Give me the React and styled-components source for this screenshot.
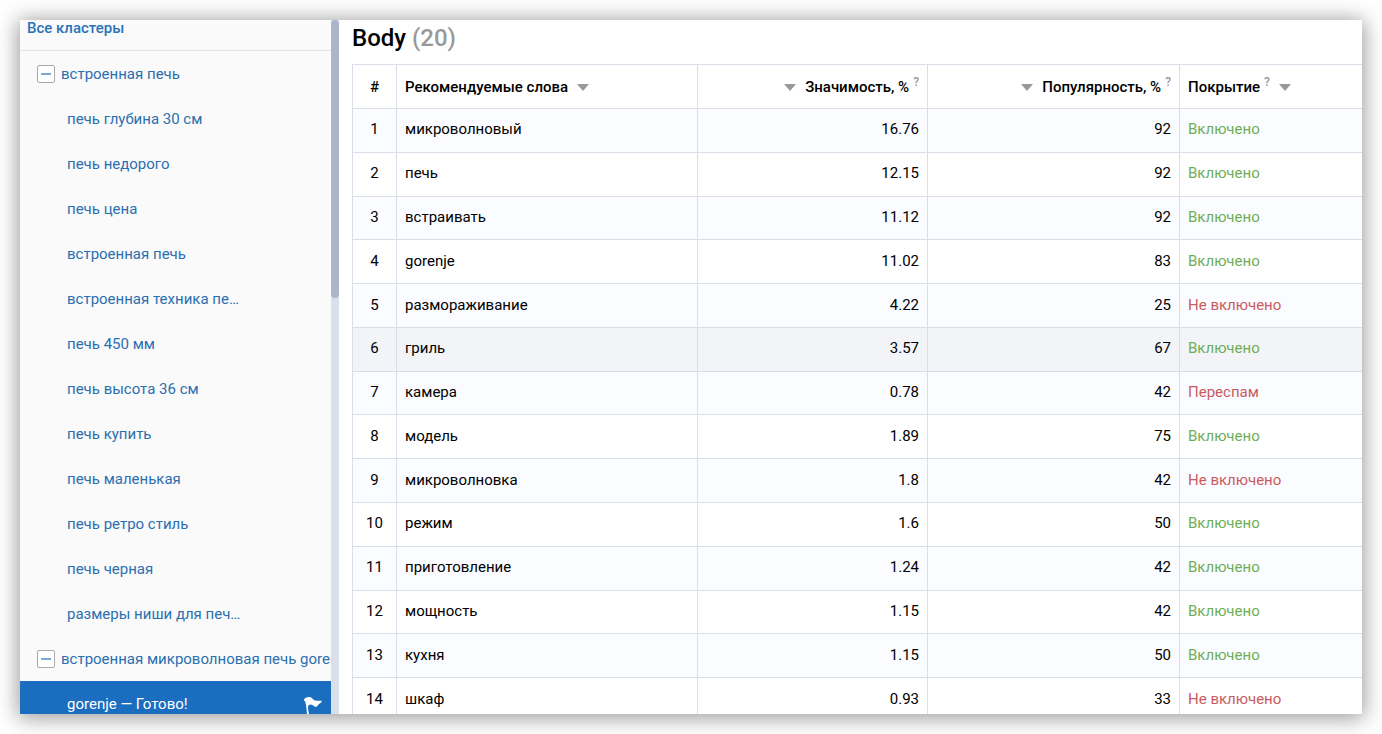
import React from "react"
import styled, { createGlobalStyle } from "styled-components"

const rows = [
  ["микроволновый", "16.76", 92, "on"],
  ["печь", "12.15", 92, "on"],
  ["встраивать", "11.12", 92, "on"],
  ["gorenje", "11.02", 83, "on"],
  ["размораживание", "4.22", 25, "off"],
  ["гриль", "3.57", 67, "on"],
  ["камера", "0.78", 42, "spam"],
  ["модель", "1.89", 75, "on"],
  ["микроволновка", "1.8", 42, "off"],
  ["режим", "1.6", 50, "on"],
  ["приготовление", "1.24", 42, "on"],
  ["мощность", "1.15", 42, "on"],
  ["кухня", "1.15", 50, "on"],
  ["шкаф", "0.93", 33, "off"],
]

const statuses = {
  on: "Включено",
  off: "Не включено",
  spam: "Переспам",
}

const statusColors = {
  on: "#6fae57",
  off: "#ca5b5e",
  spam: "#ca5b5e",
}

const clusters = [
  {
    name: "встроенная печь",
    items: [
      "печь глубина 30 см",
      "печь недорого",
      "печь цена",
      "встроенная печь",
      "встроенная техника пе…",
      "печь 450 мм",
      "печь высота 36 см",
      "печь купить",
      "печь маленькая",
      "печь ретро стиль",
      "печь черная",
      "размеры ниши для печ…",
    ],
  },
  { name: "встроенная микроволновая печь gorenje", items: [] },
]

const GlobalStyle = createGlobalStyle`
  * {
    box-sizing: border-box;
  }

  body {
    margin: 0;
    background: #fff;
    color: #000;
    font: 15px/20px Roboto, "Noto Sans", sans-serif;
  }
`

const Page = styled.div`
  height: 100vh;
  padding: 20px;
  overflow: hidden;
`

const Window = styled.div`
  display: flex;
  height: 100%;
  overflow: hidden;
  background: #fff;
  box-shadow: 0 2px 20px 2px rgba(0, 0, 0, 0.4);
`

const Sidebar = styled.nav`
  display: flex;
  flex: none;
  width: 319px;
`

const Clusters = styled.div`
  flex: 1;
  min-width: 0;
  overflow: hidden;
  background: #fafafa;
`

const AllClusters = styled.a`
  display: block;
  padding: 0 7px 14px;
  border-bottom: 1px solid #dfe3ea;
  color: #2a73b8;
  font-weight: 500;
  line-height: 16px;
  text-decoration: none;
`

const Group = styled.div`
  display: flex;
  align-items: center;
  gap: 6px;
  height: 45px;
  padding-left: 17px;
  overflow: hidden;
`

const Collapse = styled.button`
  display: flex;
  flex: none;
  align-items: center;
  justify-content: center;
  width: 18px;
  height: 18px;
  padding: 0;
  border: 1px solid #aaa;
  border-radius: 2px;
  background: #fff;

  &::before {
    content: "";
    width: 10px;
    height: 2px;
    background: #7ca9d4;
  }
`

const ClusterLink = styled.a`
  min-width: 0;
  overflow: hidden;
  color: ${(p) => (p.$active ? "#fff" : "#2a6fb0")};
  white-space: nowrap;
  text-decoration: none;
`

const Item = styled.div`
  display: flex;
  align-items: center;
  justify-content: space-between;
  height: 45px;
  padding: 0 8px 0 47px;
  background: ${(p) => (p.$active ? "#1b6dc0" : "transparent")};
`

const Track = styled.div`
  flex: none;
  width: 8px;
  background: #dadfec;
`

const Thumb = styled.div`
  height: 40%;
  border-radius: 4px;
  background: #abb6cd;
`

const Content = styled.main`
  flex: 1;
  min-width: 0;
  padding: 5px 0 0 13px;
  overflow: hidden;
`

const Title = styled.h1`
  margin: 0 0 13px;
  font-size: 24px;
  font-weight: 500;
  line-height: 26px;

  span {
    color: #999;
  }
`

// The body rows share what the header leaves of the height
const Table = styled.table`
  width: 100%;
  height: 658px;
  table-layout: fixed;
  border-collapse: collapse;
`

const Col = styled.col`
  width: ${(p) => p.$width};
`

const Cell = styled.td`
  padding: 0 8px 2px;
  border: 1px solid #d9dee8;
  border-right-color: ${(p) => (p.$last ? "transparent" : "#d9dee8")};
  color: ${(p) => p.$color || "inherit"};
  text-align: ${(p) => p.$align || "left"};
  white-space: nowrap;
`

const HeadCell = styled(Cell)`
  height: 44px;
  padding-bottom: 0;
  font-weight: 500;
`

const Row = styled.tr`
  background: #fff;

  &:nth-child(odd) {
    background: #fafcff;
  }

  &:nth-child(6) {
    background: #f3f4f8;
  }
`

const SortButton = styled.button`
  display: inline-flex;
  flex-direction: ${(p) => (p.$reverse ? "row-reverse" : "row")};
  align-items: center;
  gap: 9px;
  padding: 0;
  border: 0;
  background: none;
  color: inherit;
  font: inherit;
  vertical-align: middle;

  &::after {
    content: "";
    border: 6px solid transparent;
    border-top: 7px solid #999;
    border-bottom: 0;
  }
`

const Hint = styled.sup`
  padding-left: 4px;
  color: #999;
  font-size: 12px;
  line-height: 0;
`

function Flag() {
  return (
    <svg width="20" height="20" viewBox="0 0 20 20" fill="#fff" aria-hidden="true">
      <path d="M1 6C1 4.500 3 3 6 3C9 3 9.500 5.500 12 6.500C14 7.200 16.500 6.600 19 7C18 9 16.500 9.500 15.500 10.500C14.500 11.500 14.500 12.500 13 13C11 13 10 10.500 8 10.500C6 10.500 5 11.500 5 13C5 15.500 5.500 17.500 6 20H4C3.600 15 3.200 11 2.200 7.500C1.800 7 1 7 1 6Z" />
    </svg>
  )
}

function SortHead({ text, hint, align, last }) {
  return (
    <HeadCell as="th" $align={align} $last={last}>
      <SortButton type="button" $reverse={align === "right"}>
        <span>
          {text}
          {hint && <Hint>?</Hint>}
        </span>
      </SortButton>
    </HeadCell>
  )
}

function App() {
  return (
    <Page>
      <GlobalStyle />
      <Window>
        <Sidebar>
          <Clusters>
            <AllClusters href="#all">Все кластеры</AllClusters>
            {clusters.map(({ name, items }) => (
              <React.Fragment key={name}>
                <Group>
                  <Collapse type="button" aria-label="Свернуть" />
                  <ClusterLink href="#group">{name}</ClusterLink>
                </Group>
                {items.map((item) => (
                  <Item key={item}>
                    <ClusterLink href="#cluster">{item}</ClusterLink>
                  </Item>
                ))}
              </React.Fragment>
            ))}
            <Item $active>
              <ClusterLink href="#gorenje" $active>
                gorenje — Готово!
              </ClusterLink>
              <Flag />
            </Item>
          </Clusters>
          <Track>
            <Thumb />
          </Track>
        </Sidebar>

        <Content>
          <Title>
            Body <span>(20)</span>
          </Title>
          <Table>
            <colgroup>
              <Col $width="44px" />
              <Col $width="301px" />
              <Col $width="230px" />
              <Col $width="252px" />
              <Col />
            </colgroup>
            <thead>
              <tr>
                <HeadCell as="th" $align="center">
                  #
                </HeadCell>
                <SortHead text="Рекомендуемые слова" />
                <SortHead text="Значимость, %" hint align="right" />
                <SortHead text="Популярность, %" hint align="right" />
                <SortHead text="Покрытие" hint last />
              </tr>
            </thead>
            <tbody>
              {rows.map(([word, weight, popularity, status], i) => (
                <Row key={word}>
                  <Cell $align="center">{i + 1}</Cell>
                  <Cell>{word}</Cell>
                  <Cell $align="right">{weight}</Cell>
                  <Cell $align="right">{popularity}</Cell>
                  <Cell $color={statusColors[status]} $last>
                    {statuses[status]}
                  </Cell>
                </Row>
              ))}
            </tbody>
          </Table>
        </Content>
      </Window>
    </Page>
  )
}

export default App
